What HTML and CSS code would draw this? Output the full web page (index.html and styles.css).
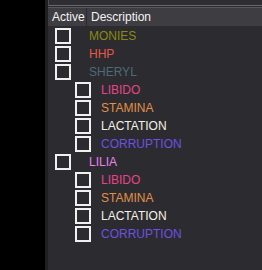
FILE: index.html
```html
<!DOCTYPE html>
<html lang="en">
<head>
    <meta charset="UTF-8">
    <title>Stats</title>
    <link rel="stylesheet" href="styles.css">
</head>
<body>
    <div class="panel">
        <div class="top-bar"></div>
        <div class="grid">
            <div class="header">
                <div class="col-active">Active</div>
                <div class="col-desc">Description</div>
            </div>
            <div class="rows">
                <div class="row"><span class="box"></span><span class="label monies">MONIES</span></div>
                <div class="row"><span class="box"></span><span class="label hhp">HHP</span></div>
                <div class="row"><span class="box"></span><span class="label sheryl">SHERYL</span></div>
                <div class="row child"><span class="box"></span><span class="label libido">LIBIDO</span></div>
                <div class="row child"><span class="box"></span><span class="label stamina">STAMINA</span></div>
                <div class="row child"><span class="box"></span><span class="label lactation">LACTATION</span></div>
                <div class="row child"><span class="box"></span><span class="label corruption">CORRUPTION</span></div>
                <div class="row"><span class="box"></span><span class="label lilia">LILIA</span></div>
                <div class="row child"><span class="box"></span><span class="label libido">LIBIDO</span></div>
                <div class="row child"><span class="box"></span><span class="label stamina">STAMINA</span></div>
                <div class="row child"><span class="box"></span><span class="label lactation">LACTATION</span></div>
                <div class="row child"><span class="box"></span><span class="label corruption">CORRUPTION</span></div>
            </div>
        </div>
    </div>
</body>
</html>
```

FILE: styles.css
```css
* {
    margin: 0;
    padding: 0;
    box-sizing: border-box;
}

html, body {
    height: 100%;
}

body {
    background-color: #000;
    font-family: 'Liberation Sans', Arial, sans-serif;
    font-size: 12px;
    overflow: hidden;
}

.panel {
    margin-left: 45px;
    height: 100%;
    border-left: 3px solid #1f1f22;
    background-color: #2c2b2f;
    display: flex;
    flex-direction: column;
}

.top-bar {
    height: 6px;
    background-color: #2f2e32;
    border-left: 1px solid #4e4d51;
    border-bottom: 1px solid #68676b;
}

.grid {
    flex: 1;
    border-top: 1px solid #58575b;
    margin-top: 1px;
}

.header {
    display: flex;
    height: 18px;
    background-color: #3e3d41;
    color: #f4f4f4;
    line-height: 18px;
}

.col-active {
    width: 39px;
    padding-left: 4px;
    border-right: 1px solid #2a292d;
}

.col-desc {
    padding-left: 4px;
}

.rows {
    padding-top: 1px;
}

.row {
    display: flex;
    align-items: center;
    height: 18px;
    padding-left: 7px;
}

.row.child {
    padding-left: 27px;
}

.box {
    width: 16px;
    height: 16px;
    border: 2px solid #f0f0f0;
    flex-shrink: 0;
}

.label {
    margin-left: 18px;
}

.child .label {
    margin-left: 10px;
}

.monies { color: #8a8a12; }
.hhp { color: #e8574b; }
.sheryl { color: #4b6b78; }
.libido { color: #e8438a; }
.stamina { color: #e29048; }
.lactation { color: #f4f2e6; }
.corruption { color: #6c52e0; }
.lilia { color: #ea84ee; }
```
